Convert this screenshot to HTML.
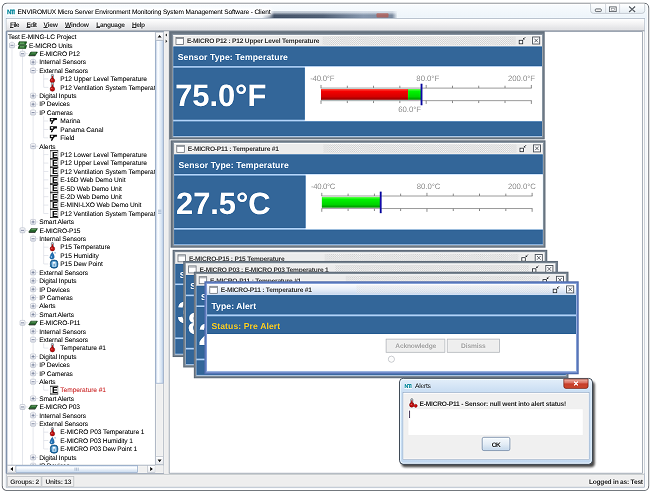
<!DOCTYPE html>
<html lang="en"><head><meta charset="utf-8"><title>ENVIROMUX Micro Server Environment Monitoring System Management Software - Client</title>
<style>
*{box-sizing:border-box;margin:0;padding:0}
html,body{width:651px;height:491px;overflow:hidden;background:#fff}
body{font-family:"Liberation Sans",sans-serif;position:relative;text-rendering:geometricPrecision}
#root{position:absolute;left:0;top:0;width:651px;height:491px;overflow:hidden;background:#fff;filter:url(#soft);}
.L{position:absolute;left:0;top:0;width:651px;height:491px;display:block;overflow:hidden}
.t{position:absolute;white-space:nowrap;line-height:12px;height:12px}
.t u{text-decoration:underline;text-decoration-thickness:0.55px;text-underline-offset:0.35px}
.clip{position:absolute;overflow:hidden}
</style></head>
<body>
<svg width="0" height="0" style="position:absolute" aria-hidden="true"><defs>
<filter id="soft" x="0" y="0" width="100%" height="100%" color-interpolation-filters="sRGB"><feConvolveMatrix order="3" kernelMatrix="0 -1 0 -1 14 -1 0 -1 0" divisor="10" edgeMode="duplicate" preserveAlpha="true"/></filter>
<filter id="fglow" x="-10%" y="-80%" width="120%" height="260%"><feGaussianBlur stdDeviation="1.6"/></filter>
<filter id="fshadow" x="-10%" y="-20%" width="120%" height="140%"><feGaussianBlur stdDeviation="1.3"/></filter>
<linearGradient id="gwin" x1="0" y1="0" x2="0" y2="1"><stop offset="0" stop-color="#f9fcfe"/><stop offset="0.03" stop-color="#edf4fa"/><stop offset="0.06" stop-color="#f3f6f9"/><stop offset="1" stop-color="#f6f8fa"/></linearGradient>
<linearGradient id="gsmudge" x1="0" y1="0" x2="1" y2="0"><stop offset="0" stop-color="#3e4d63" stop-opacity="0"/><stop offset="0.09" stop-color="#3e4d63" stop-opacity="0.95"/><stop offset="0.45" stop-color="#4a5a70" stop-opacity="0.95"/><stop offset="0.75" stop-color="#7c8ea6" stop-opacity="0.9"/><stop offset="0.96" stop-color="#6f8096" stop-opacity="0.9"/><stop offset="1" stop-color="#6f8096" stop-opacity="0"/></linearGradient>
<linearGradient id="gsmudge2" x1="0" y1="0" x2="0" y2="1"><stop offset="0" stop-color="#eef4fa" stop-opacity="1"/><stop offset="0.5" stop-color="#eef4fa" stop-opacity="0"/><stop offset="0.85" stop-color="#eef4fa" stop-opacity="0"/><stop offset="1" stop-color="#eef4fa" stop-opacity="0.7"/></linearGradient>
<linearGradient id="gcap" x1="0" y1="0" x2="0" y2="1"><stop offset="0" stop-color="#ffffff"/><stop offset="0.5" stop-color="#f3f7fa"/><stop offset="1" stop-color="#e6edf3"/></linearGradient>
<linearGradient id="gmenu" x1="0" y1="0" x2="0" y2="1"><stop offset="0" stop-color="#ffffff"/><stop offset="0.45" stop-color="#f1f1f2"/><stop offset="1" stop-color="#dcdde0"/></linearGradient>
<linearGradient id="gexp" x1="0" y1="0" x2="0" y2="1"><stop offset="0" stop-color="#fbfbfd"/><stop offset="1" stop-color="#d9dde6"/></linearGradient>
<linearGradient id="gthumbv" x1="0" y1="0" x2="1" y2="0"><stop offset="0" stop-color="#cfdcee"/><stop offset="0.3" stop-color="#fdfeff"/><stop offset="1" stop-color="#c4d6ec"/></linearGradient>
<linearGradient id="gthumbh" x1="0" y1="0" x2="0" y2="1"><stop offset="0" stop-color="#cfdcee"/><stop offset="0.3" stop-color="#fdfeff"/><stop offset="1" stop-color="#c4d6ec"/></linearGradient>
<linearGradient id="gbtn" x1="0" y1="0" x2="0" y2="1"><stop offset="0" stop-color="#ffffff"/><stop offset="1" stop-color="#e4e6ea"/></linearGradient>
<linearGradient id="gtsel" x1="0" y1="0" x2="0" y2="1"><stop offset="0" stop-color="#fbfcfe"/><stop offset="0.5" stop-color="#e7eef8"/><stop offset="1" stop-color="#c4d5ec"/></linearGradient>
<linearGradient id="gred" x1="0" y1="0" x2="0" y2="1"><stop offset="0" stop-color="#ff5a4a"/><stop offset="0.22" stop-color="#f40000"/><stop offset="0.7" stop-color="#d40000"/><stop offset="1" stop-color="#8f0000"/></linearGradient>
<linearGradient id="ggreen" x1="0" y1="0" x2="0" y2="1"><stop offset="0" stop-color="#6dff5a"/><stop offset="0.22" stop-color="#00f400"/><stop offset="0.7" stop-color="#00d400"/><stop offset="1" stop-color="#008f00"/></linearGradient>
<linearGradient id="gdlg" x1="0" y1="0" x2="0" y2="1"><stop offset="0" stop-color="#e4effa"/><stop offset="0.16" stop-color="#c9ddf2"/><stop offset="1" stop-color="#c3d9f0"/></linearGradient>
<linearGradient id="gclose" x1="0" y1="0" x2="0" y2="1"><stop offset="0" stop-color="#eab3a6"/><stop offset="0.45" stop-color="#d9695a"/><stop offset="0.5" stop-color="#c8402c"/><stop offset="1" stop-color="#c8482e"/></linearGradient>
<linearGradient id="gok" x1="0" y1="0" x2="0" y2="1"><stop offset="0" stop-color="#f6fafd"/><stop offset="0.5" stop-color="#e4edf6"/><stop offset="1" stop-color="#c3d6ea"/></linearGradient>
<pattern id="bumps" width="2.1" height="2.1" patternUnits="userSpaceOnUse"><rect width="2.1" height="2.1" fill="#f4f4f4"/><rect x="1.05" width="1.05" height="1.05" fill="#d2d2d2"/><rect y="1.05" width="1.05" height="1.05" fill="#d2d2d2"/></pattern>
</defs></svg>
<div id="root">
<svg class="L" width="651" height="491" viewBox="0 0 651 491"><rect x="2.3" y="3.2" width="646.4" height="487.3" rx="4.5" fill="url(#gwin)" stroke="#808489" stroke-width="1.1"/><rect x="3.3" y="4.2" width="644.4" height="485.3" rx="3.8" fill="none" stroke="#ffffff" stroke-width="0.9" opacity="0.9"/><rect x="262" y="11.3" width="135.5" height="7.6" fill="url(#gsmudge)"/><rect x="262" y="11.3" width="135.5" height="7.6" fill="url(#gsmudge2)"/><rect x="376.5" y="13.2" width="12" height="4.2" rx="1" fill="#c2503f" opacity="0.6"/><rect x="14" y="7.5" width="258" height="9" rx="4" fill="#ffffff" opacity="0.8" filter="url(#fglow)"/><rect x="6.90" y="8.60" width="8.40" height="7.00" fill="#ffffff" /><path d="M590.6 3.7 V10.6 Q590.6 13.4 593.4 13.4 H641.9 Q644.7 13.4 644.7 10.6 V3.7" fill="url(#gcap)" stroke="#bcc3ca" stroke-width="0.7"/><line x1="605.60" y1="3.90" x2="605.60" y2="13.20" stroke="#c6ccd2" stroke-width="0.7" /><line x1="619.60" y1="3.90" x2="619.60" y2="13.20" stroke="#c6ccd2" stroke-width="0.7" /><rect x="595.30" y="8.90" width="6.00" height="2.70" rx="0.8" fill="#e8e8e8" stroke="#6a6f75" stroke-width="0.9"/><rect x="609.40" y="6.90" width="6.80" height="4.70" fill="#f2f2f2" stroke="#6a6f75" stroke-width="0.9"/><rect x="611.20" y="8.60" width="3.20" height="1.60" fill="#ffffff" stroke="#8a8f95" stroke-width="0.6"/><path d="M629.6 7.0 L634.6 11.6 M634.6 7.0 L629.6 11.6" fill="none" stroke="#6d7278" stroke-width="1.35" stroke-linecap="square"/><rect x="6.20" y="18.60" width="638.40" height="468.60" fill="#eeeeee" stroke="#a9b4c2" stroke-width="0.7"/><rect x="6.60" y="18.90" width="637.70" height="11.70" fill="url(#gmenu)" /><line x1="6.60" y1="30.90" x2="644.30" y2="30.90" stroke="#8f97a3" stroke-width="1.0" /><rect x="6.40" y="31.60" width="157.20" height="441.60" fill="#ffffff" stroke="#8f9bab" stroke-width="1"/><rect x="5.80" y="31.40" width="1.60" height="441.80" fill="#8d9db4" /><rect x="163.80" y="31.60" width="5.20" height="441.60" fill="#eeeeee" /><rect x="169.20" y="31.60" width="473.40" height="441.60" fill="#ffffff" stroke="#98a2ae" stroke-width="0.8"/><rect x="642.90" y="31.60" width="1.50" height="441.60" fill="#f4f4f4" /><line x1="6.60" y1="474.40" x2="644.30" y2="474.40" stroke="#c4c8cc" stroke-width="0.9" /><rect x="7.60" y="476.40" width="33.60" height="10.00" fill="none" stroke="#c2c5c9" stroke-width="0.8"/><rect x="41.90" y="476.40" width="31.90" height="10.00" fill="none" stroke="#c2c5c9" stroke-width="0.8"/></svg>
<div class="t" style="left:7.00px;top:7px;font-size:6.2px;color:#158fa3;font-weight:bold;letter-spacing:-0.941px;-webkit-text-stroke:0.25px currentColor;">NTI</div>
<div class="t" style="left:17.60px;top:7px;font-size:6.5px;color:#101010;letter-spacing:-0.108px;-webkit-text-stroke:0.05px currentColor;">ENVIROMUX Micro Server Environment Monitoring System Management Software - Client</div>
<div class="t" style="left:10.00px;top:20px;font-size:6.6px;color:#404040;font-weight:bold;letter-spacing:-0.623px;"><u>F</u>ile</div>
<div class="t" style="left:26.50px;top:20px;font-size:6.6px;color:#404040;font-weight:bold;letter-spacing:-0.652px;"><u>E</u>dit</div>
<div class="t" style="left:43.50px;top:20px;font-size:6.6px;color:#404040;font-weight:bold;letter-spacing:-0.144px;"><u>V</u>iew</div>
<div class="t" style="left:65.00px;top:20px;font-size:6.6px;color:#404040;font-weight:bold;letter-spacing:-0.289px;"><u>W</u>indow</div>
<div class="t" style="left:96.30px;top:20px;font-size:6.6px;color:#404040;font-weight:bold;letter-spacing:-0.353px;"><u>L</u>anguage</div>
<div class="t" style="left:132.00px;top:20px;font-size:6.6px;color:#404040;font-weight:bold;letter-spacing:-0.435px;"><u>H</u>elp</div>
<div class="t" style="left:10.30px;top:477px;font-size:6.6px;color:#4a4a4a;font-weight:bold;letter-spacing:-0.296px;">Groups: 2</div>
<div class="t" style="left:45.40px;top:477px;font-size:6.6px;color:#4a4a4a;font-weight:bold;letter-spacing:-0.234px;">Units: 13</div>
<div class="t" style="left:588.90px;top:477px;font-size:6.6px;color:#383838;font-weight:bold;letter-spacing:-0.213px;">Logged in as: Test</div>
<svg class="L" width="651" height="491" viewBox="0 0 651 491"><line x1="12.00" y1="40.90" x2="12.00" y2="465.00" stroke="#dcdfe6" stroke-width="0.7" /><line x1="22.50" y1="48.91" x2="22.50" y2="465.00" stroke="#dcdfe6" stroke-width="0.7" /><line x1="33.10" y1="57.32" x2="33.10" y2="221.92" stroke="#dcdfe6" stroke-width="0.7" /><line x1="43.70" y1="74.14" x2="43.70" y2="87.36" stroke="#dcdfe6" stroke-width="0.7" /><line x1="43.70" y1="116.19" x2="43.70" y2="137.82" stroke="#dcdfe6" stroke-width="0.7" /><line x1="43.70" y1="149.83" x2="43.70" y2="213.51" stroke="#dcdfe6" stroke-width="0.7" /><line x1="33.10" y1="233.93" x2="33.10" y2="314.43" stroke="#dcdfe6" stroke-width="0.7" /><line x1="43.70" y1="242.34" x2="43.70" y2="263.97" stroke="#dcdfe6" stroke-width="0.7" /><line x1="33.10" y1="326.44" x2="33.10" y2="398.53" stroke="#dcdfe6" stroke-width="0.7" /><line x1="43.70" y1="343.26" x2="43.70" y2="348.07" stroke="#dcdfe6" stroke-width="0.7" /><line x1="43.70" y1="385.31" x2="43.70" y2="390.12" stroke="#dcdfe6" stroke-width="0.7" /><line x1="33.10" y1="410.54" x2="33.10" y2="465.81" stroke="#dcdfe6" stroke-width="0.7" /><line x1="43.70" y1="427.36" x2="43.70" y2="448.99" stroke="#dcdfe6" stroke-width="0.7" /><line x1="14.60" y1="45.31" x2="17.20" y2="45.31" stroke="#dcdfe6" stroke-width="0.7" /><line x1="25.10" y1="53.72" x2="27.70" y2="53.72" stroke="#dcdfe6" stroke-width="0.7" /><line x1="35.70" y1="62.13" x2="38.30" y2="62.13" stroke="#dcdfe6" stroke-width="0.7" /><line x1="35.70" y1="70.54" x2="38.30" y2="70.54" stroke="#dcdfe6" stroke-width="0.7" /><line x1="43.70" y1="78.95" x2="48.40" y2="78.95" stroke="#dcdfe6" stroke-width="0.7" /><line x1="43.70" y1="87.36" x2="48.40" y2="87.36" stroke="#dcdfe6" stroke-width="0.7" /><line x1="35.70" y1="95.77" x2="38.30" y2="95.77" stroke="#dcdfe6" stroke-width="0.7" /><line x1="35.70" y1="104.18" x2="38.30" y2="104.18" stroke="#dcdfe6" stroke-width="0.7" /><line x1="35.70" y1="112.59" x2="38.30" y2="112.59" stroke="#dcdfe6" stroke-width="0.7" /><line x1="43.70" y1="121.00" x2="48.40" y2="121.00" stroke="#dcdfe6" stroke-width="0.7" /><line x1="43.70" y1="129.41" x2="48.40" y2="129.41" stroke="#dcdfe6" stroke-width="0.7" /><line x1="43.70" y1="137.82" x2="48.40" y2="137.82" stroke="#dcdfe6" stroke-width="0.7" /><line x1="35.70" y1="146.23" x2="38.30" y2="146.23" stroke="#dcdfe6" stroke-width="0.7" /><line x1="43.70" y1="154.64" x2="48.40" y2="154.64" stroke="#dcdfe6" stroke-width="0.7" /><line x1="43.70" y1="163.05" x2="48.40" y2="163.05" stroke="#dcdfe6" stroke-width="0.7" /><line x1="43.70" y1="171.46" x2="48.40" y2="171.46" stroke="#dcdfe6" stroke-width="0.7" /><line x1="43.70" y1="179.87" x2="48.40" y2="179.87" stroke="#dcdfe6" stroke-width="0.7" /><line x1="43.70" y1="188.28" x2="48.40" y2="188.28" stroke="#dcdfe6" stroke-width="0.7" /><line x1="43.70" y1="196.69" x2="48.40" y2="196.69" stroke="#dcdfe6" stroke-width="0.7" /><line x1="43.70" y1="205.10" x2="48.40" y2="205.10" stroke="#dcdfe6" stroke-width="0.7" /><line x1="43.70" y1="213.51" x2="48.40" y2="213.51" stroke="#dcdfe6" stroke-width="0.7" /><line x1="35.70" y1="221.92" x2="38.30" y2="221.92" stroke="#dcdfe6" stroke-width="0.7" /><line x1="25.10" y1="230.33" x2="27.70" y2="230.33" stroke="#dcdfe6" stroke-width="0.7" /><line x1="35.70" y1="238.74" x2="38.30" y2="238.74" stroke="#dcdfe6" stroke-width="0.7" /><line x1="43.70" y1="247.15" x2="48.40" y2="247.15" stroke="#dcdfe6" stroke-width="0.7" /><line x1="43.70" y1="255.56" x2="48.40" y2="255.56" stroke="#dcdfe6" stroke-width="0.7" /><line x1="43.70" y1="263.97" x2="48.40" y2="263.97" stroke="#dcdfe6" stroke-width="0.7" /><line x1="35.70" y1="272.38" x2="38.30" y2="272.38" stroke="#dcdfe6" stroke-width="0.7" /><line x1="35.70" y1="280.79" x2="38.30" y2="280.79" stroke="#dcdfe6" stroke-width="0.7" /><line x1="35.70" y1="289.20" x2="38.30" y2="289.20" stroke="#dcdfe6" stroke-width="0.7" /><line x1="35.70" y1="297.61" x2="38.30" y2="297.61" stroke="#dcdfe6" stroke-width="0.7" /><line x1="35.70" y1="306.02" x2="38.30" y2="306.02" stroke="#dcdfe6" stroke-width="0.7" /><line x1="35.70" y1="314.43" x2="38.30" y2="314.43" stroke="#dcdfe6" stroke-width="0.7" /><line x1="25.10" y1="322.84" x2="27.70" y2="322.84" stroke="#dcdfe6" stroke-width="0.7" /><line x1="35.70" y1="331.25" x2="38.30" y2="331.25" stroke="#dcdfe6" stroke-width="0.7" /><line x1="35.70" y1="339.66" x2="38.30" y2="339.66" stroke="#dcdfe6" stroke-width="0.7" /><line x1="43.70" y1="348.07" x2="48.40" y2="348.07" stroke="#dcdfe6" stroke-width="0.7" /><line x1="35.70" y1="356.48" x2="38.30" y2="356.48" stroke="#dcdfe6" stroke-width="0.7" /><line x1="35.70" y1="364.89" x2="38.30" y2="364.89" stroke="#dcdfe6" stroke-width="0.7" /><line x1="35.70" y1="373.30" x2="38.30" y2="373.30" stroke="#dcdfe6" stroke-width="0.7" /><line x1="35.70" y1="381.71" x2="38.30" y2="381.71" stroke="#dcdfe6" stroke-width="0.7" /><line x1="43.70" y1="390.12" x2="48.40" y2="390.12" stroke="#dcdfe6" stroke-width="0.7" /><line x1="35.70" y1="398.53" x2="38.30" y2="398.53" stroke="#dcdfe6" stroke-width="0.7" /><line x1="25.10" y1="406.94" x2="27.70" y2="406.94" stroke="#dcdfe6" stroke-width="0.7" /><line x1="35.70" y1="415.35" x2="38.30" y2="415.35" stroke="#dcdfe6" stroke-width="0.7" /><line x1="35.70" y1="423.76" x2="38.30" y2="423.76" stroke="#dcdfe6" stroke-width="0.7" /><line x1="43.70" y1="432.17" x2="48.40" y2="432.17" stroke="#dcdfe6" stroke-width="0.7" /><line x1="43.70" y1="440.58" x2="48.40" y2="440.58" stroke="#dcdfe6" stroke-width="0.7" /><line x1="43.70" y1="448.99" x2="48.40" y2="448.99" stroke="#dcdfe6" stroke-width="0.7" /><line x1="35.70" y1="457.40" x2="38.30" y2="457.40" stroke="#dcdfe6" stroke-width="0.7" /><line x1="35.70" y1="465.81" x2="38.30" y2="465.81" stroke="#dcdfe6" stroke-width="0.7" /><rect x="9.50" y="42.81" width="5.00" height="5.00" rx="0.8" fill="url(#gexp)" stroke="#b7bcc9" stroke-width="0.6"/><line x1="10.50" y1="45.31" x2="13.50" y2="45.31" stroke="#7a839c" stroke-width="0.8" /><path d="M19.099999999999998 41.81 H26.599999999999998 L25.7 44.81 H18.2 Z" fill="#2b7430" stroke="#17451a" stroke-width="0.6"/><path d="M19.099999999999998 45.510000000000005 H26.599999999999998 L25.7 48.61 H18.2 Z" fill="#266a2a" stroke="#17451a" stroke-width="0.6"/><line x1="19.90" y1="43.11" x2="24.30" y2="43.11" stroke="#9fd49a" stroke-width="0.7" /><line x1="19.90" y1="46.91" x2="24.30" y2="46.91" stroke="#9fd49a" stroke-width="0.7" /><rect x="20.00" y="51.22" width="5.00" height="5.00" rx="0.8" fill="url(#gexp)" stroke="#b7bcc9" stroke-width="0.6"/><line x1="21.00" y1="53.72" x2="24.00" y2="53.72" stroke="#7a839c" stroke-width="0.8" /><path d="M30.9 52.019999999999996 H37.4 L35.3 55.519999999999996 H28.7 Z" fill="#2c6a31" stroke="#1d4321" stroke-width="0.6"/><line x1="31.30" y1="52.92" x2="35.90" y2="52.92" stroke="#7fb87c" stroke-width="0.6" /><line x1="29.00" y1="55.82" x2="35.30" y2="55.82" stroke="#2e332e" stroke-width="0.7" /><rect x="30.60" y="59.63" width="5.00" height="5.00" rx="0.8" fill="url(#gexp)" stroke="#b7bcc9" stroke-width="0.6"/><line x1="31.60" y1="62.13" x2="34.60" y2="62.13" stroke="#7a839c" stroke-width="0.8" /><line x1="33.10" y1="60.63" x2="33.10" y2="63.63" stroke="#7a839c" stroke-width="0.8" /><rect x="30.60" y="68.04" width="5.00" height="5.00" rx="0.8" fill="url(#gexp)" stroke="#b7bcc9" stroke-width="0.6"/><line x1="31.60" y1="70.54" x2="34.60" y2="70.54" stroke="#7a839c" stroke-width="0.8" /><rect x="51.30" y="74.25" width="2.20" height="5.30" rx="1.0" fill="#b4b9c0" stroke="#6f757c" stroke-width="0.6"/><rect x="51.80" y="76.15" width="1.20" height="3.90" fill="#bd1313" /><circle cx="52.40" cy="80.55" r="2.3" fill="#c01414" stroke="#7d0c0c" stroke-width="0.5"/><circle cx="51.80" cy="79.95" r="0.6" fill="#e57070" /><rect x="51.30" y="82.66" width="2.20" height="5.30" rx="1.0" fill="#b4b9c0" stroke="#6f757c" stroke-width="0.6"/><rect x="51.80" y="84.56" width="1.20" height="3.90" fill="#bd1313" /><circle cx="52.40" cy="88.96" r="2.3" fill="#c01414" stroke="#7d0c0c" stroke-width="0.5"/><circle cx="51.80" cy="88.36" r="0.6" fill="#e57070" /><rect x="30.60" y="93.27" width="5.00" height="5.00" rx="0.8" fill="url(#gexp)" stroke="#b7bcc9" stroke-width="0.6"/><line x1="31.60" y1="95.77" x2="34.60" y2="95.77" stroke="#7a839c" stroke-width="0.8" /><line x1="33.10" y1="94.27" x2="33.10" y2="97.27" stroke="#7a839c" stroke-width="0.8" /><rect x="30.60" y="101.68" width="5.00" height="5.00" rx="0.8" fill="url(#gexp)" stroke="#b7bcc9" stroke-width="0.6"/><line x1="31.60" y1="104.18" x2="34.60" y2="104.18" stroke="#7a839c" stroke-width="0.8" /><line x1="33.10" y1="102.68" x2="33.10" y2="105.68" stroke="#7a839c" stroke-width="0.8" /><rect x="30.60" y="110.09" width="5.00" height="5.00" rx="0.8" fill="url(#gexp)" stroke="#b7bcc9" stroke-width="0.6"/><line x1="31.60" y1="112.59" x2="34.60" y2="112.59" stroke="#7a839c" stroke-width="0.8" /><path d="M49.8 117.9 H56.9 V120.0 H55.0 L53.4 121.6 L52.199999999999996 123.9 H50.8 L51.699999999999996 121.5 H49.8 Z" fill="#1e1e1e" /><rect x="50.90" y="118.70" width="2.20" height="1.50" fill="#e8e8e8" /><path d="M49.8 126.31 H56.9 V128.41 H55.0 L53.4 130.01 L52.199999999999996 132.31 H50.8 L51.699999999999996 129.91 H49.8 Z" fill="#1e1e1e" /><rect x="50.90" y="127.11" width="2.20" height="1.50" fill="#e8e8e8" /><path d="M49.8 134.72 H56.9 V136.82 H55.0 L53.4 138.42 L52.199999999999996 140.72 H50.8 L51.699999999999996 138.32 H49.8 Z" fill="#1e1e1e" /><rect x="50.90" y="135.52" width="2.20" height="1.50" fill="#e8e8e8" /><rect x="30.60" y="143.73" width="5.00" height="5.00" rx="0.8" fill="url(#gexp)" stroke="#b7bcc9" stroke-width="0.6"/><line x1="31.60" y1="146.23" x2="34.60" y2="146.23" stroke="#7a839c" stroke-width="0.8" /><rect x="50.30" y="150.74" width="7.60" height="7.80" fill="#ffffff" stroke="#8a8a8a" stroke-width="0.7"/><line x1="50.00" y1="150.74" x2="58.20" y2="150.74" stroke="#2a2a2a" stroke-width="0.8" /><line x1="50.00" y1="158.54" x2="58.20" y2="158.54" stroke="#2a2a2a" stroke-width="0.8" /><rect x="50.30" y="159.15" width="7.60" height="7.80" fill="#ffffff" stroke="#8a8a8a" stroke-width="0.7"/><line x1="50.00" y1="159.15" x2="58.20" y2="159.15" stroke="#2a2a2a" stroke-width="0.8" /><line x1="50.00" y1="166.95" x2="58.20" y2="166.95" stroke="#2a2a2a" stroke-width="0.8" /><rect x="50.30" y="167.56" width="7.60" height="7.80" fill="#ffffff" stroke="#8a8a8a" stroke-width="0.7"/><line x1="50.00" y1="167.56" x2="58.20" y2="167.56" stroke="#2a2a2a" stroke-width="0.8" /><line x1="50.00" y1="175.36" x2="58.20" y2="175.36" stroke="#2a2a2a" stroke-width="0.8" /><rect x="50.30" y="175.97" width="7.60" height="7.80" fill="#ffffff" stroke="#8a8a8a" stroke-width="0.7"/><line x1="50.00" y1="175.97" x2="58.20" y2="175.97" stroke="#2a2a2a" stroke-width="0.8" /><line x1="50.00" y1="183.77" x2="58.20" y2="183.77" stroke="#2a2a2a" stroke-width="0.8" /><rect x="50.30" y="184.38" width="7.60" height="7.80" fill="#ffffff" stroke="#8a8a8a" stroke-width="0.7"/><line x1="50.00" y1="184.38" x2="58.20" y2="184.38" stroke="#2a2a2a" stroke-width="0.8" /><line x1="50.00" y1="192.18" x2="58.20" y2="192.18" stroke="#2a2a2a" stroke-width="0.8" /><rect x="50.30" y="192.79" width="7.60" height="7.80" fill="#ffffff" stroke="#8a8a8a" stroke-width="0.7"/><line x1="50.00" y1="192.79" x2="58.20" y2="192.79" stroke="#2a2a2a" stroke-width="0.8" /><line x1="50.00" y1="200.59" x2="58.20" y2="200.59" stroke="#2a2a2a" stroke-width="0.8" /><rect x="50.30" y="201.20" width="7.60" height="7.80" fill="#ffffff" stroke="#8a8a8a" stroke-width="0.7"/><line x1="50.00" y1="201.20" x2="58.20" y2="201.20" stroke="#2a2a2a" stroke-width="0.8" /><line x1="50.00" y1="209.00" x2="58.20" y2="209.00" stroke="#2a2a2a" stroke-width="0.8" /><rect x="50.30" y="209.61" width="7.60" height="7.80" fill="#ffffff" stroke="#8a8a8a" stroke-width="0.7"/><line x1="50.00" y1="209.61" x2="58.20" y2="209.61" stroke="#2a2a2a" stroke-width="0.8" /><line x1="50.00" y1="217.41" x2="58.20" y2="217.41" stroke="#2a2a2a" stroke-width="0.8" /><rect x="30.60" y="219.42" width="5.00" height="5.00" rx="0.8" fill="url(#gexp)" stroke="#b7bcc9" stroke-width="0.6"/><line x1="31.60" y1="221.92" x2="34.60" y2="221.92" stroke="#7a839c" stroke-width="0.8" /><line x1="33.10" y1="220.42" x2="33.10" y2="223.42" stroke="#7a839c" stroke-width="0.8" /><rect x="20.00" y="227.83" width="5.00" height="5.00" rx="0.8" fill="url(#gexp)" stroke="#b7bcc9" stroke-width="0.6"/><line x1="21.00" y1="230.33" x2="24.00" y2="230.33" stroke="#7a839c" stroke-width="0.8" /><path d="M30.9 228.63000000000002 H37.4 L35.3 232.13000000000002 H28.7 Z" fill="#2c6a31" stroke="#1d4321" stroke-width="0.6"/><line x1="31.30" y1="229.53" x2="35.90" y2="229.53" stroke="#7fb87c" stroke-width="0.6" /><line x1="29.00" y1="232.43" x2="35.30" y2="232.43" stroke="#2e332e" stroke-width="0.7" /><rect x="30.60" y="236.24" width="5.00" height="5.00" rx="0.8" fill="url(#gexp)" stroke="#b7bcc9" stroke-width="0.6"/><line x1="31.60" y1="238.74" x2="34.60" y2="238.74" stroke="#7a839c" stroke-width="0.8" /><rect x="51.30" y="242.45" width="2.20" height="5.30" rx="1.0" fill="#b4b9c0" stroke="#6f757c" stroke-width="0.6"/><rect x="51.80" y="244.35" width="1.20" height="3.90" fill="#bd1313" /><circle cx="52.40" cy="248.75" r="2.3" fill="#c01414" stroke="#7d0c0c" stroke-width="0.5"/><circle cx="51.80" cy="248.15" r="0.6" fill="#e57070" /><path d="M52.3 252.26 Q54.6 255.36 54.199999999999996 257.26 Q53.699999999999996 259.26 52.0 259.26 Q49.9 259.06 49.9 257.16 Q50.1 255.16 52.3 252.26 Z" fill="#2b78b8" stroke="#1d5a90" stroke-width="0.45"/><path d="M55.0 251.66 Q56.0 252.96 55.1 253.66 Q54.1 253.16 55.0 251.66 Z" fill="#2b78b8" /><circle cx="51.40" cy="257.06" r="0.7" fill="#9ccaf0" /><rect x="50.30" y="259.97" width="7.60" height="8.20" rx="3.2" fill="#2f74a8" stroke="#1f5a86" stroke-width="0.6"/><rect x="51.60" y="261.17" width="5.00" height="5.90" rx="1.6" fill="#8fc3e8" /><rect x="53.00" y="261.97" width="2.20" height="4.40" fill="#f4f9fd" /><rect x="53.60" y="263.57" width="1.00" height="2.80" fill="#2f74a8" /><path d="M49.5 266.16999999999996 L51.7 264.36999999999995 V266.96999999999997 Z" fill="#2f74a8" /><rect x="30.60" y="269.88" width="5.00" height="5.00" rx="0.8" fill="url(#gexp)" stroke="#b7bcc9" stroke-width="0.6"/><line x1="31.60" y1="272.38" x2="34.60" y2="272.38" stroke="#7a839c" stroke-width="0.8" /><line x1="33.10" y1="270.88" x2="33.10" y2="273.88" stroke="#7a839c" stroke-width="0.8" /><rect x="30.60" y="278.29" width="5.00" height="5.00" rx="0.8" fill="url(#gexp)" stroke="#b7bcc9" stroke-width="0.6"/><line x1="31.60" y1="280.79" x2="34.60" y2="280.79" stroke="#7a839c" stroke-width="0.8" /><line x1="33.10" y1="279.29" x2="33.10" y2="282.29" stroke="#7a839c" stroke-width="0.8" /><rect x="30.60" y="286.70" width="5.00" height="5.00" rx="0.8" fill="url(#gexp)" stroke="#b7bcc9" stroke-width="0.6"/><line x1="31.60" y1="289.20" x2="34.60" y2="289.20" stroke="#7a839c" stroke-width="0.8" /><line x1="33.10" y1="287.70" x2="33.10" y2="290.70" stroke="#7a839c" stroke-width="0.8" /><rect x="30.60" y="295.11" width="5.00" height="5.00" rx="0.8" fill="url(#gexp)" stroke="#b7bcc9" stroke-width="0.6"/><line x1="31.60" y1="297.61" x2="34.60" y2="297.61" stroke="#7a839c" stroke-width="0.8" /><line x1="33.10" y1="296.11" x2="33.10" y2="299.11" stroke="#7a839c" stroke-width="0.8" /><rect x="30.60" y="303.52" width="5.00" height="5.00" rx="0.8" fill="url(#gexp)" stroke="#b7bcc9" stroke-width="0.6"/><line x1="31.60" y1="306.02" x2="34.60" y2="306.02" stroke="#7a839c" stroke-width="0.8" /><line x1="33.10" y1="304.52" x2="33.10" y2="307.52" stroke="#7a839c" stroke-width="0.8" /><rect x="30.60" y="311.93" width="5.00" height="5.00" rx="0.8" fill="url(#gexp)" stroke="#b7bcc9" stroke-width="0.6"/><line x1="31.60" y1="314.43" x2="34.60" y2="314.43" stroke="#7a839c" stroke-width="0.8" /><line x1="33.10" y1="312.93" x2="33.10" y2="315.93" stroke="#7a839c" stroke-width="0.8" /><rect x="20.00" y="320.34" width="5.00" height="5.00" rx="0.8" fill="url(#gexp)" stroke="#b7bcc9" stroke-width="0.6"/><line x1="21.00" y1="322.84" x2="24.00" y2="322.84" stroke="#7a839c" stroke-width="0.8" /><path d="M30.9 321.14 H37.4 L35.3 324.64 H28.7 Z" fill="#2c6a31" stroke="#1d4321" stroke-width="0.6"/><line x1="31.30" y1="322.04" x2="35.90" y2="322.04" stroke="#7fb87c" stroke-width="0.6" /><line x1="29.00" y1="324.94" x2="35.30" y2="324.94" stroke="#2e332e" stroke-width="0.7" /><rect x="30.60" y="328.75" width="5.00" height="5.00" rx="0.8" fill="url(#gexp)" stroke="#b7bcc9" stroke-width="0.6"/><line x1="31.60" y1="331.25" x2="34.60" y2="331.25" stroke="#7a839c" stroke-width="0.8" /><line x1="33.10" y1="329.75" x2="33.10" y2="332.75" stroke="#7a839c" stroke-width="0.8" /><rect x="30.60" y="337.16" width="5.00" height="5.00" rx="0.8" fill="url(#gexp)" stroke="#b7bcc9" stroke-width="0.6"/><line x1="31.60" y1="339.66" x2="34.60" y2="339.66" stroke="#7a839c" stroke-width="0.8" /><rect x="51.30" y="343.37" width="2.20" height="5.30" rx="1.0" fill="#b4b9c0" stroke="#6f757c" stroke-width="0.6"/><rect x="51.80" y="345.27" width="1.20" height="3.90" fill="#bd1313" /><circle cx="52.40" cy="349.67" r="2.3" fill="#c01414" stroke="#7d0c0c" stroke-width="0.5"/><circle cx="51.80" cy="349.07" r="0.6" fill="#e57070" /><rect x="30.60" y="353.98" width="5.00" height="5.00" rx="0.8" fill="url(#gexp)" stroke="#b7bcc9" stroke-width="0.6"/><line x1="31.60" y1="356.48" x2="34.60" y2="356.48" stroke="#7a839c" stroke-width="0.8" /><line x1="33.10" y1="354.98" x2="33.10" y2="357.98" stroke="#7a839c" stroke-width="0.8" /><rect x="30.60" y="362.39" width="5.00" height="5.00" rx="0.8" fill="url(#gexp)" stroke="#b7bcc9" stroke-width="0.6"/><line x1="31.60" y1="364.89" x2="34.60" y2="364.89" stroke="#7a839c" stroke-width="0.8" /><line x1="33.10" y1="363.39" x2="33.10" y2="366.39" stroke="#7a839c" stroke-width="0.8" /><rect x="30.60" y="370.80" width="5.00" height="5.00" rx="0.8" fill="url(#gexp)" stroke="#b7bcc9" stroke-width="0.6"/><line x1="31.60" y1="373.30" x2="34.60" y2="373.30" stroke="#7a839c" stroke-width="0.8" /><line x1="33.10" y1="371.80" x2="33.10" y2="374.80" stroke="#7a839c" stroke-width="0.8" /><rect x="30.60" y="379.21" width="5.00" height="5.00" rx="0.8" fill="url(#gexp)" stroke="#b7bcc9" stroke-width="0.6"/><line x1="31.60" y1="381.71" x2="34.60" y2="381.71" stroke="#7a839c" stroke-width="0.8" /><rect x="50.30" y="386.22" width="7.60" height="7.80" fill="#ffffff" stroke="#8a8a8a" stroke-width="0.7"/><line x1="50.00" y1="386.22" x2="58.20" y2="386.22" stroke="#2a2a2a" stroke-width="0.8" /><line x1="50.00" y1="394.02" x2="58.20" y2="394.02" stroke="#2a2a2a" stroke-width="0.8" /><rect x="30.60" y="396.03" width="5.00" height="5.00" rx="0.8" fill="url(#gexp)" stroke="#b7bcc9" stroke-width="0.6"/><line x1="31.60" y1="398.53" x2="34.60" y2="398.53" stroke="#7a839c" stroke-width="0.8" /><line x1="33.10" y1="397.03" x2="33.10" y2="400.03" stroke="#7a839c" stroke-width="0.8" /><rect x="20.00" y="404.44" width="5.00" height="5.00" rx="0.8" fill="url(#gexp)" stroke="#b7bcc9" stroke-width="0.6"/><line x1="21.00" y1="406.94" x2="24.00" y2="406.94" stroke="#7a839c" stroke-width="0.8" /><path d="M30.9 405.24 H37.4 L35.3 408.74 H28.7 Z" fill="#2c6a31" stroke="#1d4321" stroke-width="0.6"/><line x1="31.30" y1="406.14" x2="35.90" y2="406.14" stroke="#7fb87c" stroke-width="0.6" /><line x1="29.00" y1="409.04" x2="35.30" y2="409.04" stroke="#2e332e" stroke-width="0.7" /><rect x="30.60" y="412.85" width="5.00" height="5.00" rx="0.8" fill="url(#gexp)" stroke="#b7bcc9" stroke-width="0.6"/><line x1="31.60" y1="415.35" x2="34.60" y2="415.35" stroke="#7a839c" stroke-width="0.8" /><line x1="33.10" y1="413.85" x2="33.10" y2="416.85" stroke="#7a839c" stroke-width="0.8" /><rect x="30.60" y="421.26" width="5.00" height="5.00" rx="0.8" fill="url(#gexp)" stroke="#b7bcc9" stroke-width="0.6"/><line x1="31.60" y1="423.76" x2="34.60" y2="423.76" stroke="#7a839c" stroke-width="0.8" /><rect x="51.30" y="427.47" width="2.20" height="5.30" rx="1.0" fill="#b4b9c0" stroke="#6f757c" stroke-width="0.6"/><rect x="51.80" y="429.37" width="1.20" height="3.90" fill="#bd1313" /><circle cx="52.40" cy="433.77" r="2.3" fill="#c01414" stroke="#7d0c0c" stroke-width="0.5"/><circle cx="51.80" cy="433.17" r="0.6" fill="#e57070" /><path d="M52.3 437.28 Q54.6 440.38 54.199999999999996 442.28 Q53.699999999999996 444.28 52.0 444.28 Q49.9 444.08 49.9 442.18 Q50.1 440.18 52.3 437.28 Z" fill="#2b78b8" stroke="#1d5a90" stroke-width="0.45"/><path d="M55.0 436.68 Q56.0 437.97999999999996 55.1 438.68 Q54.1 438.18 55.0 436.68 Z" fill="#2b78b8" /><circle cx="51.40" cy="442.08" r="0.7" fill="#9ccaf0" /><rect x="50.30" y="444.99" width="7.60" height="8.20" rx="3.2" fill="#2f74a8" stroke="#1f5a86" stroke-width="0.6"/><rect x="51.60" y="446.19" width="5.00" height="5.90" rx="1.6" fill="#8fc3e8" /><rect x="53.00" y="446.99" width="2.20" height="4.40" fill="#f4f9fd" /><rect x="53.60" y="448.59" width="1.00" height="2.80" fill="#2f74a8" /><path d="M49.5 451.19 L51.7 449.39 V451.99 Z" fill="#2f74a8" /><rect x="30.60" y="454.90" width="5.00" height="5.00" rx="0.8" fill="url(#gexp)" stroke="#b7bcc9" stroke-width="0.6"/><line x1="31.60" y1="457.40" x2="34.60" y2="457.40" stroke="#7a839c" stroke-width="0.8" /><line x1="33.10" y1="455.90" x2="33.10" y2="458.90" stroke="#7a839c" stroke-width="0.8" /><rect x="30.60" y="463.31" width="5.00" height="5.00" rx="0.8" fill="url(#gexp)" stroke="#b7bcc9" stroke-width="0.6"/><line x1="31.60" y1="465.81" x2="34.60" y2="465.81" stroke="#7a839c" stroke-width="0.8" /><line x1="33.10" y1="464.31" x2="33.10" y2="467.31" stroke="#7a839c" stroke-width="0.8" /></svg>
<div class="clip" style="left:0;top:0;width:155px;height:465px">
<div class="t" style="left:8.00px;top:32px;font-size:6.6px;color:#151515;letter-spacing:-0.112px;-webkit-text-stroke:0.06px currentColor;">Test E-MING-LC Project</div>
<div class="t" style="left:28.90px;top:41px;font-size:6.6px;color:#151515;letter-spacing:-0.142px;-webkit-text-stroke:0.06px currentColor;">E-MICRO Units</div>
<div class="t" style="left:39.40px;top:49px;font-size:6.6px;color:#151515;letter-spacing:-0.155px;-webkit-text-stroke:0.06px currentColor;">E-MICRO P12</div>
<div class="t" style="left:39.20px;top:57px;font-size:6.6px;color:#151515;letter-spacing:-0.080px;-webkit-text-stroke:0.06px currentColor;">Internal Sensors</div>
<div class="t" style="left:39.20px;top:66px;font-size:6.6px;color:#151515;letter-spacing:-0.086px;-webkit-text-stroke:0.06px currentColor;">External Sensors</div>
<div class="t" style="left:60.30px;top:74px;font-size:6.6px;color:#151515;letter-spacing:-0.045px;-webkit-text-stroke:0.06px currentColor;">P12 Upper Level Temperature</div>
<div class="t" style="left:60.30px;top:83px;font-size:6.6px;color:#151515;letter-spacing:-0.060px;-webkit-text-stroke:0.06px currentColor;">P12 Ventilation System Temperature</div>
<div class="t" style="left:39.20px;top:91px;font-size:6.6px;color:#151515;letter-spacing:-0.060px;-webkit-text-stroke:0.06px currentColor;">Digital Inputs</div>
<div class="t" style="left:39.20px;top:99px;font-size:6.6px;color:#151515;letter-spacing:-0.094px;-webkit-text-stroke:0.06px currentColor;">IP Devices</div>
<div class="t" style="left:39.20px;top:108px;font-size:6.6px;color:#151515;letter-spacing:-0.109px;-webkit-text-stroke:0.06px currentColor;">IP Cameras</div>
<div class="t" style="left:60.30px;top:116px;font-size:6.6px;color:#151515;letter-spacing:-0.034px;-webkit-text-stroke:0.06px currentColor;">Marina</div>
<div class="t" style="left:60.30px;top:125px;font-size:6.6px;color:#151515;letter-spacing:-0.047px;-webkit-text-stroke:0.06px currentColor;">Panama Canal</div>
<div class="t" style="left:60.30px;top:133px;font-size:6.6px;color:#151515;letter-spacing:-0.023px;-webkit-text-stroke:0.06px currentColor;">Field</div>
<div class="t" style="left:39.20px;top:142px;font-size:6.6px;color:#151515;letter-spacing:-0.096px;-webkit-text-stroke:0.06px currentColor;">Alerts</div>
<div class="t" style="left:52.00px;top:149px;font-size:8.8px;color:#000;font-weight:bold;font-family:"Liberation Serif",serif;-webkit-text-stroke:0.3px currentColor;">E</div>
<div class="t" style="left:60.30px;top:150px;font-size:6.6px;color:#151515;letter-spacing:-0.045px;-webkit-text-stroke:0.06px currentColor;">P12 Lower Level Temperature</div>
<div class="t" style="left:52.00px;top:157px;font-size:8.8px;color:#000;font-weight:bold;font-family:"Liberation Serif",serif;-webkit-text-stroke:0.3px currentColor;">E</div>
<div class="t" style="left:60.30px;top:158px;font-size:6.6px;color:#151515;letter-spacing:-0.045px;-webkit-text-stroke:0.06px currentColor;">P12 Upper Level Temperature</div>
<div class="t" style="left:52.00px;top:165px;font-size:8.8px;color:#000;font-weight:bold;font-family:"Liberation Serif",serif;-webkit-text-stroke:0.3px currentColor;">E</div>
<div class="t" style="left:60.30px;top:167px;font-size:6.6px;color:#151515;letter-spacing:-0.060px;-webkit-text-stroke:0.06px currentColor;">P12 Ventilation System Temperature</div>
<div class="t" style="left:52.00px;top:174px;font-size:8.8px;color:#000;font-weight:bold;font-family:"Liberation Serif",serif;-webkit-text-stroke:0.3px currentColor;">E</div>
<div class="t" style="left:60.30px;top:175px;font-size:6.6px;color:#151515;letter-spacing:-0.096px;-webkit-text-stroke:0.06px currentColor;">E-16D Web Demo Unit</div>
<div class="t" style="left:52.00px;top:182px;font-size:8.8px;color:#000;font-weight:bold;font-family:"Liberation Serif",serif;-webkit-text-stroke:0.3px currentColor;">E</div>
<div class="t" style="left:60.30px;top:184px;font-size:6.6px;color:#151515;letter-spacing:-0.102px;-webkit-text-stroke:0.06px currentColor;">E-5D Web Demo Unit</div>
<div class="t" style="left:52.00px;top:191px;font-size:8.8px;color:#000;font-weight:bold;font-family:"Liberation Serif",serif;-webkit-text-stroke:0.3px currentColor;">E</div>
<div class="t" style="left:60.30px;top:192px;font-size:6.6px;color:#151515;letter-spacing:-0.102px;-webkit-text-stroke:0.06px currentColor;">E-2D Web Demo Unit</div>
<div class="t" style="left:52.00px;top:199px;font-size:8.8px;color:#000;font-weight:bold;font-family:"Liberation Serif",serif;-webkit-text-stroke:0.3px currentColor;">E</div>
<div class="t" style="left:60.30px;top:200px;font-size:6.6px;color:#151515;letter-spacing:-0.137px;-webkit-text-stroke:0.06px currentColor;">E-MINI-LXO Web Demo Unit</div>
<div class="t" style="left:52.00px;top:208px;font-size:8.8px;color:#000;font-weight:bold;font-family:"Liberation Serif",serif;-webkit-text-stroke:0.3px currentColor;">E</div>
<div class="t" style="left:60.30px;top:209px;font-size:6.6px;color:#151515;letter-spacing:-0.060px;-webkit-text-stroke:0.06px currentColor;">P12 Ventilation System Temperature</div>
<div class="t" style="left:39.20px;top:217px;font-size:6.6px;color:#151515;letter-spacing:-0.104px;-webkit-text-stroke:0.06px currentColor;">Smart Alerts</div>
<div class="t" style="left:39.40px;top:226px;font-size:6.6px;color:#151515;letter-spacing:-0.140px;-webkit-text-stroke:0.06px currentColor;">E-MICRO-P15</div>
<div class="t" style="left:39.20px;top:234px;font-size:6.6px;color:#151515;letter-spacing:-0.080px;-webkit-text-stroke:0.06px currentColor;">Internal Sensors</div>
<div class="t" style="left:60.30px;top:242px;font-size:6.6px;color:#151515;letter-spacing:-0.039px;-webkit-text-stroke:0.06px currentColor;">P15 Temperature</div>
<div class="t" style="left:60.30px;top:251px;font-size:6.6px;color:#151515;letter-spacing:-0.073px;-webkit-text-stroke:0.06px currentColor;">P15 Humidity</div>
<div class="t" style="left:60.30px;top:259px;font-size:6.6px;color:#151515;letter-spacing:-0.083px;-webkit-text-stroke:0.06px currentColor;">P15 Dew Point</div>
<div class="t" style="left:39.20px;top:268px;font-size:6.6px;color:#151515;letter-spacing:-0.086px;-webkit-text-stroke:0.06px currentColor;">External Sensors</div>
<div class="t" style="left:39.20px;top:276px;font-size:6.6px;color:#151515;letter-spacing:-0.060px;-webkit-text-stroke:0.06px currentColor;">Digital Inputs</div>
<div class="t" style="left:39.20px;top:285px;font-size:6.6px;color:#151515;letter-spacing:-0.094px;-webkit-text-stroke:0.06px currentColor;">IP Devices</div>
<div class="t" style="left:39.20px;top:293px;font-size:6.6px;color:#151515;letter-spacing:-0.109px;-webkit-text-stroke:0.06px currentColor;">IP Cameras</div>
<div class="t" style="left:39.20px;top:301px;font-size:6.6px;color:#151515;letter-spacing:-0.096px;-webkit-text-stroke:0.06px currentColor;">Alerts</div>
<div class="t" style="left:39.20px;top:310px;font-size:6.6px;color:#151515;letter-spacing:-0.104px;-webkit-text-stroke:0.06px currentColor;">Smart Alerts</div>
<div class="t" style="left:39.40px;top:318px;font-size:6.6px;color:#151515;letter-spacing:-0.096px;-webkit-text-stroke:0.06px currentColor;">E-MICRO-P11</div>
<div class="t" style="left:39.20px;top:327px;font-size:6.6px;color:#151515;letter-spacing:-0.080px;-webkit-text-stroke:0.06px currentColor;">Internal Sensors</div>
<div class="t" style="left:39.20px;top:335px;font-size:6.6px;color:#151515;letter-spacing:-0.086px;-webkit-text-stroke:0.06px currentColor;">External Sensors</div>
<div class="t" style="left:60.30px;top:343px;font-size:6.6px;color:#151515;letter-spacing:-0.036px;-webkit-text-stroke:0.06px currentColor;">Temperature #1</div>
<div class="t" style="left:39.20px;top:352px;font-size:6.6px;color:#151515;letter-spacing:-0.060px;-webkit-text-stroke:0.06px currentColor;">Digital Inputs</div>
<div class="t" style="left:39.20px;top:360px;font-size:6.6px;color:#151515;letter-spacing:-0.094px;-webkit-text-stroke:0.06px currentColor;">IP Devices</div>
<div class="t" style="left:39.20px;top:369px;font-size:6.6px;color:#151515;letter-spacing:-0.109px;-webkit-text-stroke:0.06px currentColor;">IP Cameras</div>
<div class="t" style="left:39.20px;top:377px;font-size:6.6px;color:#151515;letter-spacing:-0.096px;-webkit-text-stroke:0.06px currentColor;">Alerts</div>
<div class="t" style="left:52.00px;top:384px;font-size:8.8px;color:#000;font-weight:bold;font-family:"Liberation Serif",serif;-webkit-text-stroke:0.3px currentColor;">E</div>
<div class="t" style="left:60.30px;top:385px;font-size:6.6px;color:#cf3636;letter-spacing:-0.036px;-webkit-text-stroke:0.06px currentColor;">Temperature #1</div>
<div class="t" style="left:39.20px;top:394px;font-size:6.6px;color:#151515;letter-spacing:-0.104px;-webkit-text-stroke:0.06px currentColor;">Smart Alerts</div>
<div class="t" style="left:39.40px;top:402px;font-size:6.6px;color:#151515;letter-spacing:-0.155px;-webkit-text-stroke:0.06px currentColor;">E-MICRO P03</div>
<div class="t" style="left:39.20px;top:411px;font-size:6.6px;color:#151515;letter-spacing:-0.080px;-webkit-text-stroke:0.06px currentColor;">Internal Sensors</div>
<div class="t" style="left:39.20px;top:419px;font-size:6.6px;color:#151515;letter-spacing:-0.086px;-webkit-text-stroke:0.06px currentColor;">External Sensors</div>
<div class="t" style="left:60.30px;top:427px;font-size:6.6px;color:#151515;letter-spacing:-0.094px;-webkit-text-stroke:0.06px currentColor;">E-MICRO P03 Temperature 1</div>
<div class="t" style="left:60.30px;top:436px;font-size:6.6px;color:#151515;letter-spacing:-0.121px;-webkit-text-stroke:0.06px currentColor;">E-MICRO P03 Humidity 1</div>
<div class="t" style="left:60.30px;top:444px;font-size:6.6px;color:#151515;letter-spacing:-0.124px;-webkit-text-stroke:0.06px currentColor;">E-MICRO P03 Dew Point 1</div>
<div class="t" style="left:39.20px;top:453px;font-size:6.6px;color:#151515;letter-spacing:-0.060px;-webkit-text-stroke:0.06px currentColor;">Digital Inputs</div>
<div class="t" style="left:39.20px;top:461px;font-size:6.6px;color:#151515;letter-spacing:-0.094px;-webkit-text-stroke:0.06px currentColor;">IP Devices</div>
</div>
<svg class="L" width="651" height="491" viewBox="0 0 651 491"><rect x="155.20" y="32.10" width="8.20" height="432.90" fill="#f0f0f0" /><line x1="155.40" y1="32.10" x2="155.40" y2="465.00" stroke="#a3adbd" stroke-width="0.8" /><rect x="155.80" y="40.60" width="7.40" height="342.60" fill="url(#gthumbv)" stroke="#9bb0cc" stroke-width="0.7"/><line x1="158.00" y1="210.20" x2="161.40" y2="210.20" stroke="#8fa3c0" stroke-width="0.6" /><line x1="158.00" y1="211.80" x2="161.40" y2="211.80" stroke="#8fa3c0" stroke-width="0.6" /><line x1="158.00" y1="213.40" x2="161.40" y2="213.40" stroke="#8fa3c0" stroke-width="0.6" /><rect x="155.80" y="32.30" width="7.40" height="8.00" fill="url(#gbtn)" stroke="#b9c0ca" stroke-width="0.6"/><path d="M157.6 37.6 L159.6 34.9 L161.6 37.6 Z" fill="#222" /><rect x="155.80" y="456.70" width="7.40" height="8.00" fill="url(#gbtn)" stroke="#b9c0ca" stroke-width="0.6"/><path d="M157.6 459.5 L159.6 462.2 L161.6 459.5 Z" fill="#222" /><rect x="7.00" y="465.10" width="156.40" height="7.80" fill="#f0f0f0" /><line x1="7.00" y1="465.20" x2="163.40" y2="465.20" stroke="#a3adbd" stroke-width="0.8" /><rect x="15.90" y="465.60" width="121.50" height="7.00" fill="url(#gthumbh)" stroke="#9bb0cc" stroke-width="0.7"/><line x1="75.00" y1="467.60" x2="75.00" y2="470.80" stroke="#8fa3c0" stroke-width="0.6" /><line x1="76.60" y1="467.60" x2="76.60" y2="470.80" stroke="#8fa3c0" stroke-width="0.6" /><line x1="78.20" y1="467.60" x2="78.20" y2="470.80" stroke="#8fa3c0" stroke-width="0.6" /><rect x="7.60" y="465.60" width="8.00" height="7.00" fill="url(#gbtn)" stroke="#b9c0ca" stroke-width="0.6"/><path d="M13.0 467.1 L10.3 469.1 L13.0 471.1 Z" fill="#222" /><rect x="147.50" y="465.60" width="7.70" height="7.00" fill="url(#gbtn)" stroke="#b9c0ca" stroke-width="0.6"/><path d="M150.2 467.1 L152.9 469.1 L150.2 471.1 Z" fill="#222" /><rect x="155.30" y="465.30" width="8.10" height="7.60" fill="#eeeeee" /><path d="M167.0 33.4 L165.2 35.0 L167.0 36.6 Z" fill="#4a4a4a" /><path d="M165.6 39.6 L167.4 41.3 L165.6 43.0 Z" fill="#4a4a4a" /><rect x="169.20" y="31.20" width="375.50" height="108.20" fill="#687481" /><rect x="171.60" y="33.40" width="372.10" height="105.00" fill="#77838f" /><rect x="172.60" y="34.40" width="370.10" height="103.00" fill="#9aa5b1" /><rect x="173.30" y="35.10" width="368.70" height="11.80" fill="#ececec" /><rect x="173.30" y="35.10" width="368.70" height="0.80" fill="#f8f8f8" /><rect x="173.30" y="45.70" width="368.70" height="1.20" fill="#dfdfdf" /><rect x="322.60" y="36.50" width="193.10" height="8.50" fill="url(#bumps)" /><rect x="176.00" y="37.40" width="7.50" height="7.00" fill="#ffffff" stroke="#767b82" stroke-width="0.8"/><line x1="176.00" y1="38.50" x2="183.50" y2="38.50" stroke="#8a8f96" stroke-width="0.9" /><rect x="519.20" y="40.30" width="3.50" height="3.50" fill="#ffffff" stroke="#3c4046" stroke-width="0.85"/><path d="M525.40 37.10 L523.50 39.10" fill="none" stroke="#33373c" stroke-width="0.7"/><path d="M523.10 37.80 V39.60 H524.90 Z" fill="#2e3136" /><rect x="532.60" y="37.00" width="7.10" height="7.00" fill="#ffffff" stroke="#5a6068" stroke-width="0.9"/><path d="M534.30 38.60 L538.00 42.40 M538.00 38.60 L534.30 42.40" fill="none" stroke="#4a4f57" stroke-width="0.8"/></svg>
<div class="t" style="left:186.90px;top:36px;font-size:6.6px;color:#444444;font-weight:bold;letter-spacing:-0.201px;">E-MICRO P12 : P12 Upper Level Temperature</div>
<svg class="L" width="651" height="491" viewBox="0 0 651 491"><rect x="173.30" y="46.50" width="368.70" height="90.20" fill="#a6c9f0" /><rect x="304.80" y="66.70" width="237.20" height="54.40" fill="#ffffff" /><rect x="173.30" y="46.50" width="368.70" height="19.60" fill="#336699" /><rect x="173.30" y="67.70" width="131.50" height="52.00" fill="#336699" /><rect x="173.30" y="121.40" width="368.70" height="14.60" fill="#336699" /><line x1="320.70" y1="88.10" x2="531.72" y2="88.10" stroke="#8a8a8a" stroke-width="0.8" /><line x1="320.70" y1="100.70" x2="531.72" y2="100.70" stroke="#8a8a8a" stroke-width="0.8" /><line x1="321.00" y1="84.90" x2="321.00" y2="88.10" stroke="#7c7c7c" stroke-width="0.8" /><line x1="321.00" y1="100.70" x2="321.00" y2="103.90" stroke="#7c7c7c" stroke-width="0.8" /><line x1="347.29" y1="85.70" x2="347.29" y2="88.10" stroke="#7c7c7c" stroke-width="0.8" /><line x1="347.29" y1="100.70" x2="347.29" y2="103.10" stroke="#7c7c7c" stroke-width="0.8" /><line x1="373.58" y1="85.70" x2="373.58" y2="88.10" stroke="#7c7c7c" stroke-width="0.8" /><line x1="373.58" y1="100.70" x2="373.58" y2="103.10" stroke="#7c7c7c" stroke-width="0.8" /><line x1="399.87" y1="85.70" x2="399.87" y2="88.10" stroke="#7c7c7c" stroke-width="0.8" /><line x1="399.87" y1="100.70" x2="399.87" y2="103.10" stroke="#7c7c7c" stroke-width="0.8" /><line x1="426.16" y1="84.90" x2="426.16" y2="88.10" stroke="#7c7c7c" stroke-width="0.8" /><line x1="426.16" y1="100.70" x2="426.16" y2="103.90" stroke="#7c7c7c" stroke-width="0.8" /><line x1="452.45" y1="85.70" x2="452.45" y2="88.10" stroke="#7c7c7c" stroke-width="0.8" /><line x1="452.45" y1="100.70" x2="452.45" y2="103.10" stroke="#7c7c7c" stroke-width="0.8" /><line x1="478.74" y1="85.70" x2="478.74" y2="88.10" stroke="#7c7c7c" stroke-width="0.8" /><line x1="478.74" y1="100.70" x2="478.74" y2="103.10" stroke="#7c7c7c" stroke-width="0.8" /><line x1="505.03" y1="85.70" x2="505.03" y2="88.10" stroke="#7c7c7c" stroke-width="0.8" /><line x1="505.03" y1="100.70" x2="505.03" y2="103.10" stroke="#7c7c7c" stroke-width="0.8" /><line x1="531.32" y1="84.90" x2="531.32" y2="88.10" stroke="#7c7c7c" stroke-width="0.8" /><line x1="531.32" y1="100.70" x2="531.32" y2="103.90" stroke="#7c7c7c" stroke-width="0.8" /><rect x="321.00" y="89.00" width="87.03" height="10.80" fill="url(#gred)" /><rect x="408.03" y="89.00" width="13.14" height="10.80" fill="url(#ggreen)" /><rect x="420.58" y="83.70" width="1.90" height="21.60" fill="#1c1ca6" /></svg>
<div class="t" style="left:310.20px;top:73px;font-size:7.8px;color:#9b9b9b;letter-spacing:-0.227px;">-40.0°F</div>
<div class="t" style="left:416.35px;top:73px;font-size:7.8px;color:#9b9b9b;letter-spacing:-0.050px;">80.0°F</div>
<div class="t" style="left:508.00px;top:73px;font-size:7.8px;color:#9b9b9b;letter-spacing:-0.050px;">200.0°F</div>
<div class="t" style="left:398.22px;top:104px;font-size:7.8px;color:#9b9b9b;letter-spacing:-0.050px;">60.0°F</div>
<div class="t" style="left:177.70px;top:51px;font-size:8.6px;color:#eef4fb;font-weight:bold;letter-spacing:0.113px;">Sensor Type: Temperature</div>
<div class="t" style="left:175.20px;top:90px;font-size:30.9px;color:#ffffff;font-weight:bold;letter-spacing:-0.050px;">75.0°F</div>
<svg class="L" width="651" height="491" viewBox="0 0 651 491"><rect x="170.50" y="140.30" width="375.00" height="107.40" fill="#687481" /><rect x="172.40" y="141.30" width="372.10" height="105.40" fill="#77838f" /><rect x="173.40" y="142.30" width="370.10" height="103.40" fill="#9aa5b1" /><rect x="174.10" y="143.00" width="368.70" height="11.80" fill="#ececec" /><rect x="174.10" y="143.00" width="368.70" height="0.80" fill="#f8f8f8" /><rect x="174.10" y="153.60" width="368.70" height="1.20" fill="#dfdfdf" /><rect x="323.40" y="144.40" width="193.10" height="8.50" fill="url(#bumps)" /><rect x="176.80" y="145.30" width="7.50" height="7.00" fill="#ffffff" stroke="#767b82" stroke-width="0.8"/><line x1="176.80" y1="146.40" x2="184.30" y2="146.40" stroke="#8a8f96" stroke-width="0.9" /><rect x="520.00" y="148.20" width="3.50" height="3.50" fill="#ffffff" stroke="#3c4046" stroke-width="0.85"/><path d="M526.20 145.00 L524.30 147.00" fill="none" stroke="#33373c" stroke-width="0.7"/><path d="M523.90 145.70 V147.50 H525.70 Z" fill="#2e3136" /><rect x="533.40" y="144.90" width="7.10" height="7.00" fill="#ffffff" stroke="#5a6068" stroke-width="0.9"/><path d="M535.10 146.50 L538.80 150.30 M538.80 146.50 L535.10 150.30" fill="none" stroke="#4a4f57" stroke-width="0.8"/></svg>
<div class="t" style="left:187.70px;top:144px;font-size:6.6px;color:#444444;font-weight:bold;letter-spacing:-0.201px;">E-MICRO-P11 : Temperature #1</div>
<svg class="L" width="651" height="491" viewBox="0 0 651 491"><rect x="174.10" y="154.40" width="368.70" height="90.60" fill="#a6c9f0" /><rect x="305.60" y="174.60" width="237.20" height="54.80" fill="#ffffff" /><rect x="174.10" y="154.40" width="368.70" height="19.60" fill="#336699" /><rect x="174.10" y="175.60" width="131.50" height="52.40" fill="#336699" /><rect x="174.10" y="229.70" width="368.70" height="14.60" fill="#336699" /><line x1="321.50" y1="196.00" x2="532.52" y2="196.00" stroke="#8a8a8a" stroke-width="0.8" /><line x1="321.50" y1="208.60" x2="532.52" y2="208.60" stroke="#8a8a8a" stroke-width="0.8" /><line x1="321.80" y1="192.80" x2="321.80" y2="196.00" stroke="#7c7c7c" stroke-width="0.8" /><line x1="321.80" y1="208.60" x2="321.80" y2="211.80" stroke="#7c7c7c" stroke-width="0.8" /><line x1="348.09" y1="193.60" x2="348.09" y2="196.00" stroke="#7c7c7c" stroke-width="0.8" /><line x1="348.09" y1="208.60" x2="348.09" y2="211.00" stroke="#7c7c7c" stroke-width="0.8" /><line x1="374.38" y1="193.60" x2="374.38" y2="196.00" stroke="#7c7c7c" stroke-width="0.8" /><line x1="374.38" y1="208.60" x2="374.38" y2="211.00" stroke="#7c7c7c" stroke-width="0.8" /><line x1="400.67" y1="193.60" x2="400.67" y2="196.00" stroke="#7c7c7c" stroke-width="0.8" /><line x1="400.67" y1="208.60" x2="400.67" y2="211.00" stroke="#7c7c7c" stroke-width="0.8" /><line x1="426.96" y1="192.80" x2="426.96" y2="196.00" stroke="#7c7c7c" stroke-width="0.8" /><line x1="426.96" y1="208.60" x2="426.96" y2="211.80" stroke="#7c7c7c" stroke-width="0.8" /><line x1="453.25" y1="193.60" x2="453.25" y2="196.00" stroke="#7c7c7c" stroke-width="0.8" /><line x1="453.25" y1="208.60" x2="453.25" y2="211.00" stroke="#7c7c7c" stroke-width="0.8" /><line x1="479.54" y1="193.60" x2="479.54" y2="196.00" stroke="#7c7c7c" stroke-width="0.8" /><line x1="479.54" y1="208.60" x2="479.54" y2="211.00" stroke="#7c7c7c" stroke-width="0.8" /><line x1="505.83" y1="193.60" x2="505.83" y2="196.00" stroke="#7c7c7c" stroke-width="0.8" /><line x1="505.83" y1="208.60" x2="505.83" y2="211.00" stroke="#7c7c7c" stroke-width="0.8" /><line x1="532.12" y1="192.80" x2="532.12" y2="196.00" stroke="#7c7c7c" stroke-width="0.8" /><line x1="532.12" y1="208.60" x2="532.12" y2="211.80" stroke="#7c7c7c" stroke-width="0.8" /><rect x="321.80" y="196.90" width="58.55" height="10.80" fill="url(#ggreen)" /><rect x="379.75" y="191.60" width="1.90" height="21.60" fill="#1c1ca6" /></svg>
<div class="t" style="left:311.00px;top:181px;font-size:7.8px;color:#9b9b9b;letter-spacing:-0.373px;">-40.0°C</div>
<div class="t" style="left:416.72px;top:181px;font-size:7.8px;color:#9b9b9b;letter-spacing:-0.050px;">80.0°C</div>
<div class="t" style="left:507.92px;top:181px;font-size:7.8px;color:#9b9b9b;letter-spacing:-0.050px;">200.0°C</div>
<div class="t" style="left:178.50px;top:159px;font-size:8.6px;color:#eef4fb;font-weight:bold;letter-spacing:0.113px;">Sensor Type: Temperature</div>
<div class="t" style="left:176.00px;top:198px;font-size:30.9px;color:#ffffff;font-weight:bold;letter-spacing:-0.050px;">27.5°C</div>
<svg class="L" width="651" height="491" viewBox="0 0 651 491"><rect x="172.60" y="249.80" width="374.70" height="107.30" fill="#687481" /><rect x="173.60" y="250.80" width="372.70" height="105.30" fill="#77838f" /><rect x="174.60" y="251.80" width="370.70" height="103.30" fill="#9aa5b1" /><rect x="175.30" y="252.50" width="369.30" height="11.40" fill="#ececec" /><rect x="175.30" y="252.50" width="369.30" height="0.80" fill="#f8f8f8" /><rect x="175.30" y="262.70" width="369.30" height="1.20" fill="#dfdfdf" /><rect x="324.60" y="253.90" width="193.70" height="8.10" fill="url(#bumps)" /><rect x="178.00" y="254.80" width="7.50" height="7.00" fill="#ffffff" stroke="#767b82" stroke-width="0.8"/><line x1="178.00" y1="255.90" x2="185.50" y2="255.90" stroke="#8a8f96" stroke-width="0.9" /><rect x="521.80" y="257.70" width="3.50" height="3.50" fill="#ffffff" stroke="#3c4046" stroke-width="0.85"/><path d="M528.00 254.50 L526.10 256.50" fill="none" stroke="#33373c" stroke-width="0.7"/><path d="M525.70 255.20 V257.00 H527.50 Z" fill="#2e3136" /><rect x="535.20" y="254.40" width="7.10" height="7.00" fill="#ffffff" stroke="#5a6068" stroke-width="0.9"/><path d="M536.90 256.00 L540.60 259.80 M540.60 256.00 L536.90 259.80" fill="none" stroke="#4a4f57" stroke-width="0.8"/></svg>
<div class="t" style="left:188.90px;top:254px;font-size:6.6px;color:#444444;font-weight:bold;letter-spacing:-0.201px;">E-MICRO-P15 : P15 Temperature</div>
<svg class="L" width="651" height="491" viewBox="0 0 651 491"><rect x="175.30" y="263.90" width="369.30" height="90.50" fill="#a6c9f0" /><rect x="306.80" y="284.10" width="237.80" height="54.70" fill="#ffffff" /><rect x="175.30" y="263.90" width="369.30" height="19.60" fill="#336699" /><rect x="175.30" y="285.10" width="131.50" height="52.30" fill="#336699" /><rect x="175.30" y="339.10" width="369.30" height="14.60" fill="#336699" /></svg>
<div class="t" style="left:179.70px;top:269px;font-size:8.6px;color:#eef4fb;font-weight:bold;letter-spacing:0.113px;">Sensor Type: Temperature</div>
<div class="t" style="left:177.20px;top:307px;font-size:30.9px;color:#ffffff;font-weight:bold;letter-spacing:-0.050px;">31.4°C</div>
<svg class="L" width="651" height="491" viewBox="0 0 651 491"><rect x="183.20" y="260.90" width="374.70" height="106.60" fill="#687481" /><rect x="184.20" y="261.90" width="372.70" height="104.60" fill="#77838f" /><rect x="185.20" y="262.90" width="370.70" height="102.60" fill="#9aa5b1" /><rect x="185.90" y="263.60" width="369.30" height="11.40" fill="#ececec" /><rect x="185.90" y="263.60" width="369.30" height="0.80" fill="#f8f8f8" /><rect x="185.90" y="273.80" width="369.30" height="1.20" fill="#dfdfdf" /><rect x="335.20" y="265.00" width="193.70" height="8.10" fill="url(#bumps)" /><rect x="188.60" y="265.90" width="7.50" height="7.00" fill="#ffffff" stroke="#767b82" stroke-width="0.8"/><line x1="188.60" y1="267.00" x2="196.10" y2="267.00" stroke="#8a8f96" stroke-width="0.9" /><rect x="532.40" y="268.80" width="3.50" height="3.50" fill="#ffffff" stroke="#3c4046" stroke-width="0.85"/><path d="M538.60 265.60 L536.70 267.60" fill="none" stroke="#33373c" stroke-width="0.7"/><path d="M536.30 266.30 V268.10 H538.10 Z" fill="#2e3136" /><rect x="545.80" y="265.50" width="7.10" height="7.00" fill="#ffffff" stroke="#5a6068" stroke-width="0.9"/><path d="M547.50 267.10 L551.20 270.90 M551.20 267.10 L547.50 270.90" fill="none" stroke="#4a4f57" stroke-width="0.8"/></svg>
<div class="t" style="left:199.50px;top:265px;font-size:6.6px;color:#444444;font-weight:bold;letter-spacing:-0.201px;">E-MICRO P03 : E-MICRO P03 Temperature 1</div>
<svg class="L" width="651" height="491" viewBox="0 0 651 491"><rect x="185.90" y="275.00" width="369.30" height="89.80" fill="#a6c9f0" /><rect x="317.40" y="295.20" width="237.80" height="54.00" fill="#ffffff" /><rect x="185.90" y="275.00" width="369.30" height="19.60" fill="#336699" /><rect x="185.90" y="296.20" width="131.50" height="51.60" fill="#336699" /><rect x="185.90" y="349.50" width="369.30" height="14.60" fill="#336699" /></svg>
<div class="t" style="left:190.30px;top:280px;font-size:8.6px;color:#eef4fb;font-weight:bold;letter-spacing:0.113px;">Sensor Type: Temperature</div>
<div class="t" style="left:187.80px;top:318px;font-size:30.9px;color:#ffffff;font-weight:bold;letter-spacing:-0.050px;">80.1°F</div>
<svg class="L" width="651" height="491" viewBox="0 0 651 491"><rect x="193.80" y="271.70" width="374.70" height="106.60" fill="#687481" /><rect x="194.80" y="272.70" width="372.70" height="104.60" fill="#77838f" /><rect x="195.80" y="273.70" width="370.70" height="102.60" fill="#9aa5b1" /><rect x="196.50" y="274.40" width="369.30" height="11.40" fill="#ececec" /><rect x="196.50" y="274.40" width="369.30" height="0.80" fill="#f8f8f8" /><rect x="196.50" y="284.60" width="369.30" height="1.20" fill="#dfdfdf" /><rect x="345.80" y="275.80" width="193.70" height="8.10" fill="url(#bumps)" /><rect x="199.20" y="276.70" width="7.50" height="7.00" fill="#ffffff" stroke="#767b82" stroke-width="0.8"/><line x1="199.20" y1="277.80" x2="206.70" y2="277.80" stroke="#8a8f96" stroke-width="0.9" /><rect x="543.00" y="279.60" width="3.50" height="3.50" fill="#ffffff" stroke="#3c4046" stroke-width="0.85"/><path d="M549.20 276.40 L547.30 278.40" fill="none" stroke="#33373c" stroke-width="0.7"/><path d="M546.90 277.10 V278.90 H548.70 Z" fill="#2e3136" /><rect x="556.40" y="276.30" width="7.10" height="7.00" fill="#ffffff" stroke="#5a6068" stroke-width="0.9"/><path d="M558.10 277.90 L561.80 281.70 M561.80 277.90 L558.10 281.70" fill="none" stroke="#4a4f57" stroke-width="0.8"/></svg>
<div class="t" style="left:210.10px;top:276px;font-size:6.6px;color:#444444;font-weight:bold;letter-spacing:-0.201px;">E-MICRO-P11 : Temperature #1</div>
<svg class="L" width="651" height="491" viewBox="0 0 651 491"><rect x="196.50" y="285.80" width="369.30" height="89.80" fill="#a6c9f0" /><rect x="328.00" y="306.00" width="237.80" height="54.00" fill="#ffffff" /><rect x="196.50" y="285.80" width="369.30" height="19.60" fill="#336699" /><rect x="196.50" y="307.00" width="131.50" height="51.60" fill="#336699" /><rect x="196.50" y="360.30" width="369.30" height="14.60" fill="#336699" /></svg>
<div class="t" style="left:200.90px;top:291px;font-size:8.6px;color:#eef4fb;font-weight:bold;letter-spacing:0.113px;">Sensor Type: Temperature</div>
<div class="t" style="left:198.40px;top:329px;font-size:30.9px;color:#ffffff;font-weight:bold;letter-spacing:-0.050px;">27.5°C</div>
<svg class="L" width="651" height="491" viewBox="0 0 651 491"><rect x="204.40" y="281.30" width="374.30" height="93.00" fill="#5470b0" /><rect x="205.40" y="282.30" width="372.30" height="91.00" fill="#6482c4" /><rect x="206.40" y="283.30" width="370.30" height="89.00" fill="#9db4e0" /><rect x="207.10" y="284.00" width="368.90" height="11.10" fill="url(#gtsel)" /><rect x="356.40" y="285.40" width="193.30" height="7.80" fill="url(#bumps)" opacity="0.35"/><rect x="209.80" y="286.30" width="7.50" height="7.00" fill="#ffffff" stroke="#767b82" stroke-width="0.8"/><line x1="209.80" y1="287.40" x2="217.30" y2="287.40" stroke="#8a8f96" stroke-width="0.9" /><rect x="553.20" y="289.20" width="3.50" height="3.50" fill="#ffffff" stroke="#3c4046" stroke-width="0.85"/><path d="M559.40 286.00 L557.50 288.00" fill="none" stroke="#33373c" stroke-width="0.7"/><path d="M557.10 286.70 V288.50 H558.90 Z" fill="#2e3136" /><rect x="566.60" y="285.90" width="7.10" height="7.00" fill="#ffffff" stroke="#5a6068" stroke-width="0.9"/><path d="M568.30 287.50 L572.00 291.30 M572.00 287.50 L568.30 291.30" fill="none" stroke="#4a4f57" stroke-width="0.8"/></svg>
<div class="t" style="left:220.70px;top:285px;font-size:6.6px;color:#444444;font-weight:bold;letter-spacing:-0.201px;">E-MICRO-P11 : Temperature #1</div>
<svg class="L" width="651" height="491" viewBox="0 0 651 491"><rect x="207.10" y="295.10" width="368.90" height="39.20" fill="#a6c9f0" /><rect x="207.10" y="295.10" width="368.90" height="19.30" fill="#336699" /><rect x="207.10" y="316.30" width="368.90" height="17.70" fill="#336699" /><rect x="207.10" y="334.00" width="368.90" height="36.90" fill="#ffffff" /><rect x="386.10" y="339.10" width="58.80" height="13.20" fill="#eeeeee" stroke="#b9bcc1" stroke-width="0.8"/><rect x="447.20" y="339.10" width="52.30" height="13.20" fill="#eeeeee" stroke="#b9bcc1" stroke-width="0.8"/><circle cx="391.40" cy="359.20" r="3.1" fill="#fbfbfb" stroke="#bfc2c6" stroke-width="0.7"/></svg>
<div class="t" style="left:211.40px;top:300px;font-size:8.6px;color:#eef4fb;font-weight:bold;letter-spacing:0.083px;">Type: Alert</div>
<div class="t" style="left:211.40px;top:320px;font-size:8.6px;color:#e9c32c;font-weight:bold;letter-spacing:0.109px;">Status: Pre Alert</div>
<div class="t" style="left:395.30px;top:341px;font-size:6.6px;color:#a9a9a9;font-weight:bold;letter-spacing:-0.164px;">Acknowledge</div>
<div class="t" style="left:461.00px;top:341px;font-size:6.6px;color:#a9a9a9;font-weight:bold;letter-spacing:-0.102px;">Dismiss</div>
<svg class="L" width="651" height="491" viewBox="0 0 651 491"><rect x="401.4" y="381.2" width="193.4" height="86.0" rx="4" fill="#000" opacity="0.7" filter="url(#fshadow)"/><rect x="399.6" y="378.4" width="192.7" height="85.8" rx="3.6" fill="url(#gdlg)" stroke="#3d4753" stroke-width="0.9"/><rect x="400.6" y="379.4" width="190.7" height="83.8" rx="2.8" fill="none" stroke="#eef6fd" stroke-width="0.8" opacity="0.9"/><path d="M563.8 379.0 V386.2 Q563.8 388.4 566.0 388.4 H585.9 Q588.1 388.4 588.1 386.2 V379.0 Z" fill="url(#gclose)" stroke="#7a3028" stroke-width="0.7"/><path d="M574.2 381.6 L577.8 385.4 M577.8 381.6 L574.2 385.4" fill="none" stroke="#ffffff" stroke-width="1.3"/><rect x="403.40" y="393.00" width="185.30" height="66.20" fill="#f0f0f0" stroke="#ffffff" stroke-width="0.9"/><rect x="403.00" y="392.60" width="186.10" height="67.00" fill="none" stroke="#8fa4bd" stroke-width="0.5"/><rect x="408.40" y="409.30" width="174.30" height="25.60" fill="#ffffff" /><line x1="409.60" y1="410.60" x2="409.60" y2="418.00" stroke="#4a3a5a" stroke-width="0.9" /><rect x="482.20" y="437.30" width="27.70" height="13.30" rx="1.6" fill="url(#gok)" stroke="#7f93ad" stroke-width="0.8"/><rect x="410.70" y="398.60" width="2.20" height="5.30" rx="1.0" fill="#b4b9c0" stroke="#6f757c" stroke-width="0.6"/><rect x="411.20" y="400.50" width="1.20" height="3.90" fill="#bd1313" /><circle cx="411.80" cy="404.90" r="2.3" fill="#c01414" stroke="#7d0c0c" stroke-width="0.5"/><circle cx="411.20" cy="404.30" r="0.6" fill="#e57070" /><circle cx="415.70" cy="405.80" r="1.6" fill="#cf1212" stroke="#7d0c0c" stroke-width="0.4"/><rect x="404.40" y="384.00" width="7.50" height="4.60" fill="#ffffff" /></svg>
<div class="t" style="left:404.50px;top:381px;font-size:5.3px;color:#158fa3;font-weight:bold;letter-spacing:-0.616px;-webkit-text-stroke:0.2px currentColor;">NTI</div>
<div class="t" style="left:414.90px;top:381px;font-size:6.7px;color:#1a1a1a;letter-spacing:-0.224px;">Alerts</div>
<div class="t" style="left:419.60px;top:399px;font-size:6.6px;color:#383838;font-weight:bold;letter-spacing:-0.194px;">E-MICRO-P11 - Sensor: null went into alert status!</div>
<div class="t" style="left:491.80px;top:440px;font-size:6.6px;color:#333;font-weight:bold;letter-spacing:-1.000px;">OK</div>
</div>
</body></html>
